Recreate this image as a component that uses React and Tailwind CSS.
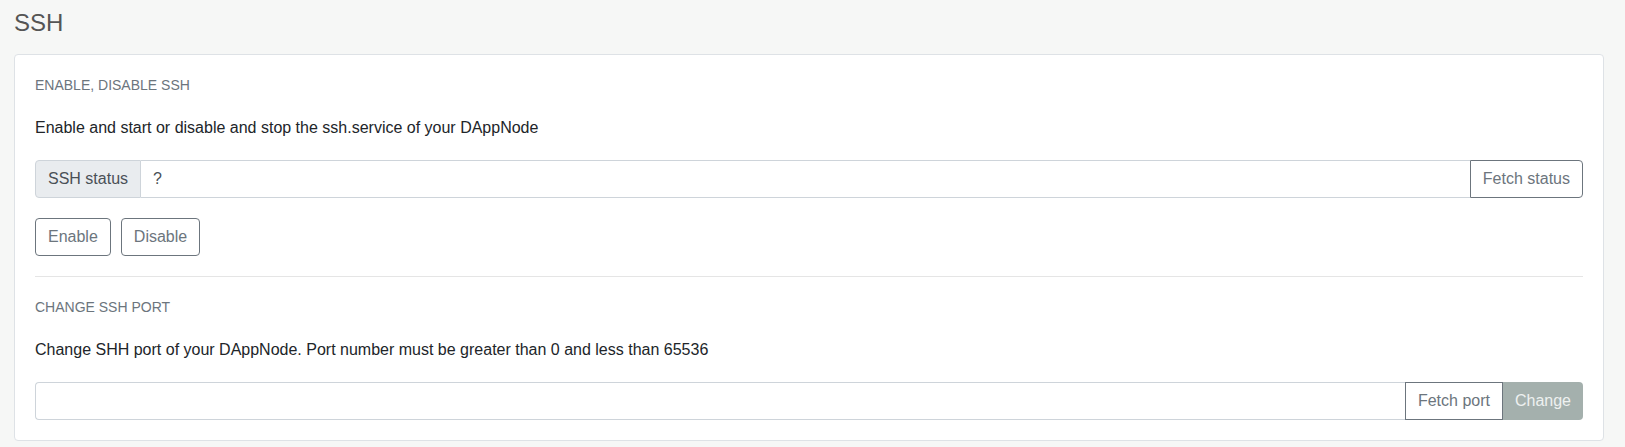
export default function App() {
    return (
        <div className="min-h-[447px] bg-[#f6f7f6] pl-[14px] pr-[21px] pt-[8px] font-['Liberation_Sans',Arial,sans-serif] text-[#212529]">
            {/* Page title */}
            <h1 className="mb-[17px] text-[24px] leading-[29px] text-[#555]">SSH</h1>

            {/* Card */}
            <div className="rounded-[4px] border border-[#dee2e6] bg-white px-5 pt-5 pb-5">
                {/* Enable / disable */}
                <div className="mb-5 text-[14px] uppercase leading-[21px] text-[#6c757d]">Enable, disable SSH</div>
                <p className="mb-5 text-[16px] leading-[24px]">Enable and start or disable and stop the ssh.service of your DAppNode</p>

                <div className="mb-5 flex h-[38px]">
                    <span className="flex items-center rounded-l-[4px] border border-[#ced4da] bg-[#e9ecef] px-3 text-[16px] text-[#495057]">
                        SSH status
                    </span>
                    <div className="flex flex-1 items-center border-y border-[#ced4da] px-3 text-[16px] text-[#495057]">?</div>
                    <button className="rounded-r-[4px] border border-[#6c757d] px-3 text-[16px] text-[#6c757d]">Fetch status</button>
                </div>

                <div className="flex gap-[10px]">
                    <button className="h-[38px] rounded-[4px] border border-[#6c757d] px-3 text-[16px] text-[#6c757d]">Enable</button>
                    <button className="h-[38px] rounded-[4px] border border-[#6c757d] px-3 text-[16px] text-[#6c757d]">Disable</button>
                </div>

                <hr className="my-5 border-t border-[#e5e5e5]" />

                {/* Change port */}
                <div className="mb-5 text-[14px] uppercase leading-[21px] text-[#6c757d]">Change SSH port</div>
                <p className="mb-5 text-[16px] leading-[24px]">Change SHH port of your DAppNode. Port number must be greater than 0 and less than 65536</p>

                <div className="flex h-[38px]">
                    <input
                        type="text"
                        className="flex-1 rounded-l-[4px] border border-r-0 border-[#ced4da] px-3 text-[16px] outline-none"
                    />
                    <button className="border border-[#6c757d] px-3 text-[16px] text-[#6c757d]">Fetch port</button>
                    <button className="rounded-r-[4px] bg-[#a4b0ad] px-3 text-[16px] text-[#eef1f0]">Change</button>
                </div>
            </div>
        </div>
    );
}
